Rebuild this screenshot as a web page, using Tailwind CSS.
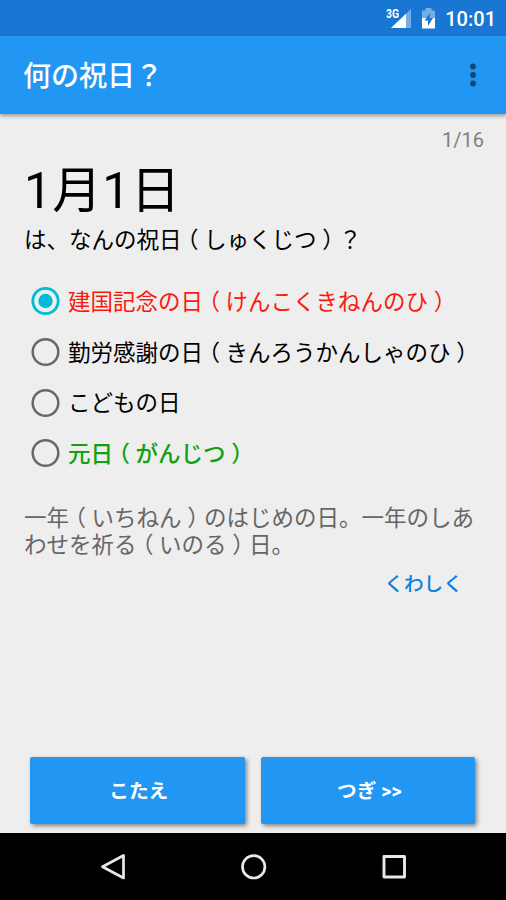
<!DOCTYPE html>
<html lang="ja">
<head>
  <meta charset="UTF-8">
  <meta name="viewport" content="width=device-width, initial-scale=1.0">
  <title>何の祝日？</title>
  <script src="https://cdn.jsdelivr.net/npm/@tailwindcss/browser@4"></script>
</head>
<body class="bg-[#eeeeee] text-black font-[Roboto,'Noto_Sans_CJK_JP',sans-serif]">
  <div class="h-[900px] w-[506px] flex flex-col overflow-hidden">

    <!-- status bar -->
    <div class="h-9 shrink-0 bg-[#1976d2] flex items-center justify-end pr-[10px] text-white">
      <svg class="w-7 h-[26px] mr-[8px]" viewBox="0 0 28 26">
        <path d="M26 4V23H6z" fill="#75ade5"/>
        <path d="M21 8.800V23H6z" fill="#fff"/>
        <path d="M0 2H14V10L11 14H0z" fill="#1976d2"/>
        <text x="1" y="13" font-family="Roboto" font-size="12" font-weight="700" fill="#fff" textLength="13" lengthAdjust="spacingAndGlyphs">3G</text>
      </svg>
      <svg class="w-[15px] h-[22px] mt-[1px] mr-[9px]" viewBox="0 0 15 22">
        <path d="M4.500 0h6v2.500H14V11H1V2.500h3.500z" fill="#75ade5"/>
        <path d="M1 10h13v10.500H1z" fill="#fff"/>
        <path d="M9 5L3.500 12.500H7V18L12 10H8.500z" fill="#1976d2"/>
      </svg>
      <span class="text-[20px] leading-9 font-medium pt-[2px]">10:01</span>
    </div>

    <!-- app bar -->
    <header class="relative h-[78px] shrink-0 bg-[#2196f3] shadow-[0_2px_4px_rgba(0,0,0,0.35)] flex items-center justify-between pl-[23px] pr-[29px]">
      <h1 class="pt-[4px] text-[28px] leading-10 font-medium text-white">何の祝日？</h1>
      <svg class="w-2 h-6" viewBox="0 0 8 24" fill="#14466f">
        <circle cx="4" cy="3.500" r="2.900"/>
        <circle cx="4" cy="12" r="2.900"/>
        <circle cx="4" cy="20.500" r="2.900"/>
      </svg>
    </header>

    <main class="grow flex flex-col">
      <div class="pt-[14px] pr-[22px] text-right text-[20px] leading-6 text-[#808080]">1/16</div>

      <div class="px-6">
        <h2 class="mt-[6px] h-[68px] text-[49.500px] leading-[66px] tracking-[0.500px] whitespace-nowrap">1月1日</h2>
        <p class="text-[22.500px] leading-7 whitespace-nowrap">は、なんの祝日<span class="px-[0.25em] [font-feature-settings:'halt']">（</span>しゅくじつ<span class="px-[0.25em] [font-feature-settings:'halt']">）</span>？</p>
      </div>

      <!-- choices -->
      <ul class="mt-[22px] pl-[30px] text-[22.500px] whitespace-nowrap">
        <li class="h-[50.700px] flex items-center gap-2">
          <svg class="w-[30px] h-[30px]" viewBox="0 0 30 30"><circle cx="15.500" cy="15" r="12.700" fill="none" stroke="#00bcd4" stroke-width="2.800"/><circle cx="15.500" cy="15" r="7.200" fill="#00bcd4"/></svg>
          <span class="pt-[3px] text-[#f91a10]">建国記念の日<span class="px-[0.25em] [font-feature-settings:'halt']">（</span>けんこくきねんのひ<span class="px-[0.25em] [font-feature-settings:'halt']">）</span></span>
        </li>
        <li class="h-[50.700px] flex items-center gap-2">
          <svg class="w-[30px] h-[30px]" viewBox="0 0 30 30"><circle cx="15.500" cy="15" r="12.800" fill="none" stroke="#686868" stroke-width="2.500"/></svg>
          <span class="pt-[3px]">勤労感謝の日<span class="px-[0.25em] [font-feature-settings:'halt']">（</span>きんろうかんしゃのひ<span class="px-[0.25em] [font-feature-settings:'halt']">）</span></span>
        </li>
        <li class="h-[50.700px] flex items-center gap-2">
          <svg class="w-[30px] h-[30px]" viewBox="0 0 30 30"><circle cx="15.500" cy="15" r="12.800" fill="none" stroke="#686868" stroke-width="2.500"/></svg>
          <span class="pt-[3px]">こどもの日</span>
        </li>
        <li class="h-[50.700px] flex items-center gap-2">
          <svg class="w-[30px] h-[30px]" viewBox="0 0 30 30"><circle cx="15.500" cy="15" r="12.800" fill="none" stroke="#686868" stroke-width="2.500"/></svg>
          <span class="pt-[2px] text-[#10a010] font-medium">元日<span class="px-[0.25em] [font-feature-settings:'halt']">（</span>がんじつ<span class="px-[0.25em] [font-feature-settings:'halt']">）</span></span>
        </li>
      </ul>

      <!-- explanation -->
      <p class="mt-[26px] pl-6 text-[22.500px] leading-[27px] text-[#666666] whitespace-nowrap">一年<span class="px-[0.25em] [font-feature-settings:'halt']">（</span>いちねん<span class="px-[0.25em] [font-feature-settings:'halt']">）</span>のはじめの日。一年のしあ<br>わせを祈る<span class="px-[0.25em] [font-feature-settings:'halt']">（</span>いのる<span class="px-[0.25em] [font-feature-settings:'halt']">）</span>日。</p>
      <a href="#" class="mt-[12px] mr-[43px] self-end text-[19.700px] leading-7 font-medium text-[#0d7fdc]">くわしく</a>

      <div class="mt-auto mb-[9px] pl-[30px] pr-[31px] flex gap-4">
        <button class="h-[67px] flex-1 pt-[3px] pl-[3px] rounded-[2px] bg-[#2196f3] text-white text-[19.700px] font-bold shadow-[2px_2px_4px_rgba(0,0,0,0.45)]">こたえ</button>
        <button class="h-[67px] flex-1 pt-[3px] pl-[3px] rounded-[2px] bg-[#2196f3] text-white text-[19.700px] font-bold shadow-[2px_2px_4px_rgba(0,0,0,0.45)]">つぎ &gt;&gt;</button>
      </div>
    </main>

    <!-- navigation bar -->
    <nav class="h-[67px] shrink-0 bg-black flex items-center justify-center gap-[112px] pl-[2px]">
      <svg class="w-7 h-7" viewBox="0 0 28 28" fill="none" stroke="#e8e8e8" stroke-width="2.700" stroke-linejoin="round"><path d="M23.500 2.500V25L2.500 13.700z"/></svg>
      <svg class="w-7 h-7" viewBox="0 0 28 28" fill="none" stroke="#e8e8e8" stroke-width="2.700"><circle cx="13.700" cy="13.800" r="11.200"/></svg>
      <svg class="w-7 h-7" viewBox="0 0 28 28" fill="none" stroke="#e8e8e8" stroke-width="2.900" stroke-linejoin="round"><rect x="4" y="3.500" width="20.500" height="20.500"/></svg>
    </nav>
  </div>
</body>
</html>
